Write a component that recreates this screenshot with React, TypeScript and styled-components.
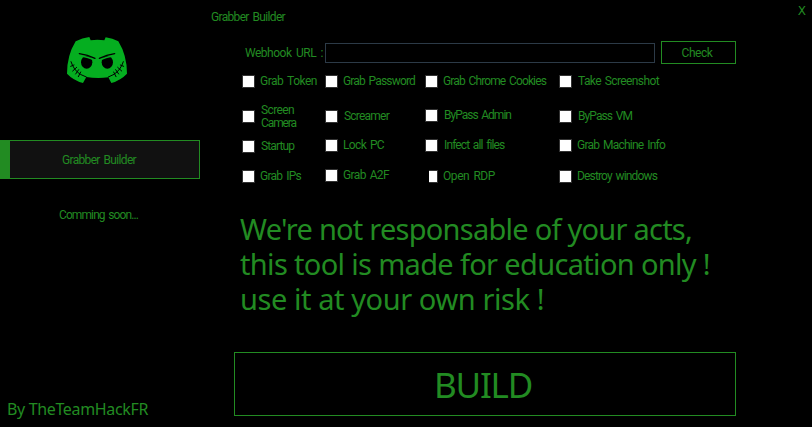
import React, { useLayoutEffect, useRef, useState } from "react";
import styled, { createGlobalStyle } from "styled-components";

const green = "#228b22";

const GlobalStyle = createGlobalStyle`
  *, *::before, *::after { box-sizing: border-box; }
  body { margin: 0; background: #000; overflow: hidden; }
`;

const Window = styled.div`
  display: flex;
  width: 812px;
  height: 427px;
  background: #000;
  color: ${green};
  font: 400 12px/14px Roboto, "Liberation Sans", sans-serif;
`;

const Sidebar = styled.aside`
  display: flex;
  flex-direction: column;
  width: 200px;
  padding-top: 25px;
`;

const Logo = styled.svg`
  display: block;
  width: 85px;
  height: 70px;
  margin-left: 55px;
`;

const NavItem = styled.div<{ $active?: boolean }>`
  display: flex;
  align-items: center;
  height: 39px;
  border: ${(p) => (p.$active ? `1px solid ${green}` : "none")};
  border-left: ${(p) => (p.$active ? `10px solid ${green}` : "none")};
  background: ${(p) => (p.$active ? "#111" : "transparent")};
  margin-top: ${(p) => (p.$active ? 45 : 16)}px;
  padding-left: ${(p) => (p.$active ? 52 : 59)}px;
  word-spacing: 1.5px;
`;

const Credit = styled.footer`
  margin-top: auto;
  padding: 0 0 7px 7px;
  font: 16px/22px "Noto Sans", sans-serif;
`;

const Main = styled.main`
  flex: 1;
  display: flex;
  flex-direction: column;
`;

const TitleBar = styled.header`
  display: flex;
  justify-content: space-between;
  height: 41px;
  padding: 10px 6px 0 11px;
  word-spacing: 1.5px;
`;

const CloseButton = styled.button`
  align-self: flex-start;
  margin-top: -6px;
  padding: 0;
  border: 0;
  background: none;
  color: ${green};
  font: 12px/14px "DejaVu Sans", sans-serif;
`;

const WebhookRow = styled.div`
  display: flex;
  align-items: center;
  height: 23px;
  padding-left: 45px;
  word-spacing: 2px;
`;

const UrlInput = styled.input`
  width: 330px;
  height: 20px;
  margin: 1px 6px 0 2px;
  padding: 0 4px;
  border: 1px solid #2c3a47;
  background: #000;
  color: ${green};
  outline: none;
`;

const OutlineButton = styled.button<{ $large?: boolean }>`
  display: flex;
  align-items: center;
  justify-content: center;
  width: ${(p) => (p.$large ? 502 : 75)}px;
  height: ${(p) => (p.$large ? 64 : 23)}px;
  margin: ${(p) => (p.$large ? "35px 0 0 34px" : "0")};
  padding: ${(p) => (p.$large ? "2px 4px 0 0" : "0 3px 0 0")};
  border: 1px solid ${green};
  background: #000;
  color: ${green};
  font: ${(p) => (p.$large ? '35px/48px "Noto Sans", sans-serif' : "inherit")};
`;

const Options = styled.div`
  display: grid;
  grid-template-columns: 83px 100px 134px 120px;
  height: 148px;
  padding: 10px 0 0 42px;
  word-spacing: 1.5px;
`;

const OptionColumn = styled.div`
  display: grid;
  grid-template-rows: 35px 30px 30px 30px;
`;

const Option = styled.label<{ $shift: number; $indent: number }>`
  display: grid;
  grid-template-columns: 13px 1fr;
  grid-template-rows: 15px;
  column-gap: ${(p) => p.$indent}px;
  align-items: center;
  height: 15px;
  margin-top: ${(p) => p.$shift}px;
`;

const Box = styled.input<{ $clipped?: boolean }>`
  appearance: none;
  justify-self: end;
  width: ${(p) => (p.$clipped ? 9 : 13)}px;
  height: 13px;
  margin: 0;
  border: 1px solid #333;
  border-left-width: ${(p) => (p.$clipped ? 0 : 1)}px;
  background: #fff;
`;

const OptionText = styled.span`
  display: flex;
  flex-direction: column;
  line-height: 13px;
`;

const Notice = styled.p`
  margin: -1px 0 1px 40px;
  height: 105px;
  display: flex;
  flex-direction: column;
  font: 29px/35px "Noto Sans", sans-serif;
`;

const Line = styled.span`
  display: block;
  width: max-content;
  white-space: pre;
`;

/* Spreads the letters of a single line evenly over a given width. */
function Fit({ text, width }: { text: string; width: number }) {
  const ref = useRef<HTMLSpanElement>(null);
  const [spacing, setSpacing] = useState(0);
  useLayoutEffect(() => {
    const el = ref.current;
    if (!el) return;
    el.style.letterSpacing = "0px";
    setSpacing((width - el.getBoundingClientRect().width) / text.length);
  }, [text, width]);
  return (
    <Line ref={ref} style={{ letterSpacing: `${spacing.toFixed(3)}px` }}>
      {text}
    </Line>
  );
}

type Item = { lines: [string, number][]; shift?: number; indent?: number; clipped?: boolean };

const columns: Item[][] = [
  [
    { lines: [["Grab Token", 57]], indent: 5 },
    { lines: [["Screen", 33], ["Camera", 35]] },
    { lines: [["Startup", 33]] },
    { lines: [["Grab IPs", 41]], indent: 5 },
  ],
  [
    { lines: [["Grab Password", 72]], indent: 5 },
    { lines: [["Screamer", 45]] },
    { lines: [["Lock PC", 41]], shift: -1, indent: 5 },
    { lines: [["Grab A2F", 46]], shift: -1, indent: 5 },
  ],
  [
    { lines: [["Grab Chrome Cookies", 103]], indent: 5 },
    { lines: [["ByPass Admin", 67]], shift: -1 },
    { lines: [["Infect all files", 60]], shift: -1 },
    { lines: [["Open RDP", 52]], indent: 5, clipped: true },
  ],
  [
    { lines: [["Take Screenshot", 81]] },
    { lines: [["ByPass VM", 54]] },
    { lines: [["Grab Machine Info", 88]], shift: -1, indent: 5 },
    { lines: [["Destroy windows", 80]], indent: 5 },
  ],
];

function MaskLogo() {
  return (
    <Logo viewBox="0 0 255 210">
      <path
        fill="#05ae20"
        d="M62 49Q82 39 103 36L107 46Q127 43 148 46L152 37Q173 40 190 49Q216 91 216 146Q197 166 169 174L160 157Q126 161 94 156L84 174Q55 166 36 146Q36 91 62 49Z"
      />
      <ellipse cx="95" cy="112" rx="17" ry="19" />
      <ellipse cx="157" cy="112" rx="17" ry="19" />
      <path
        fill="none"
        stroke="#05ae20"
        strokeWidth="4"
        d="M80 93Q100 96 116 104M172 93Q152 96 137 104"
      />
      <g fill="none" stroke="#000" strokeWidth="4" strokeLinecap="round">
        <path d="M73 86Q98 90 120 100M179 86Q155 90 133 100" />
        <path strokeWidth="3" d="M48 110Q56 135 76 148L94 156M205 110Q197 135 177 148L160 156" />
        <path
          strokeWidth="3"
          d="M47 124L57 120M53 138L65 127M62 147L71 134M70 155L77 141M206 124L196 120M200 138L188 127M191 147L182 134M183 155L176 141"
        />
      </g>
    </Logo>
  );
}

export default function App() {
  return (
    <>
      <GlobalStyle />
      <Window>
        <Sidebar>
          <MaskLogo />
          <NavItem $active>
            <Fit text="Grabber Builder" width={74} />
          </NavItem>
          <NavItem>
            <Fit text="Comming soon..." width={79} />
          </NavItem>
          <Credit>
            <Fit text="By TheTeamHackFR" width={141} />
          </Credit>
        </Sidebar>
        <Main>
          <TitleBar>
            <Fit text="Grabber Builder" width={74} />
            <CloseButton>X</CloseButton>
          </TitleBar>
          <WebhookRow>
            <Fit text="Webhook URL :" width={78} />
            <UrlInput aria-label="Webhook URL" />
            <OutlineButton>
              <Fit text="Check" width={31} />
            </OutlineButton>
          </WebhookRow>
          <Options>
            {columns.map((items, c) => (
              <OptionColumn key={c}>
                {items.map(({ lines, shift = 0, indent = 6, clipped }) => (
                  <Option key={lines[0][0]} $shift={shift} $indent={indent}>
                    <Box type="checkbox" $clipped={clipped} />
                    <OptionText>
                      {lines.map(([text, width]) => (
                        <Fit key={text} text={text} width={width} />
                      ))}
                    </OptionText>
                  </Option>
                ))}
              </OptionColumn>
            ))}
          </Options>
          <Notice>
            <Fit text="We're not responsable of your acts," width={452} />
            <Fit text="this tool is made for education only !" width={470} />
            <Fit text="use it at your own risk !" width={304} />
          </Notice>
          <OutlineButton $large>
            <Fit text="BUILD" width={98} />
          </OutlineButton>
        </Main>
      </Window>
    </>
  );
}
